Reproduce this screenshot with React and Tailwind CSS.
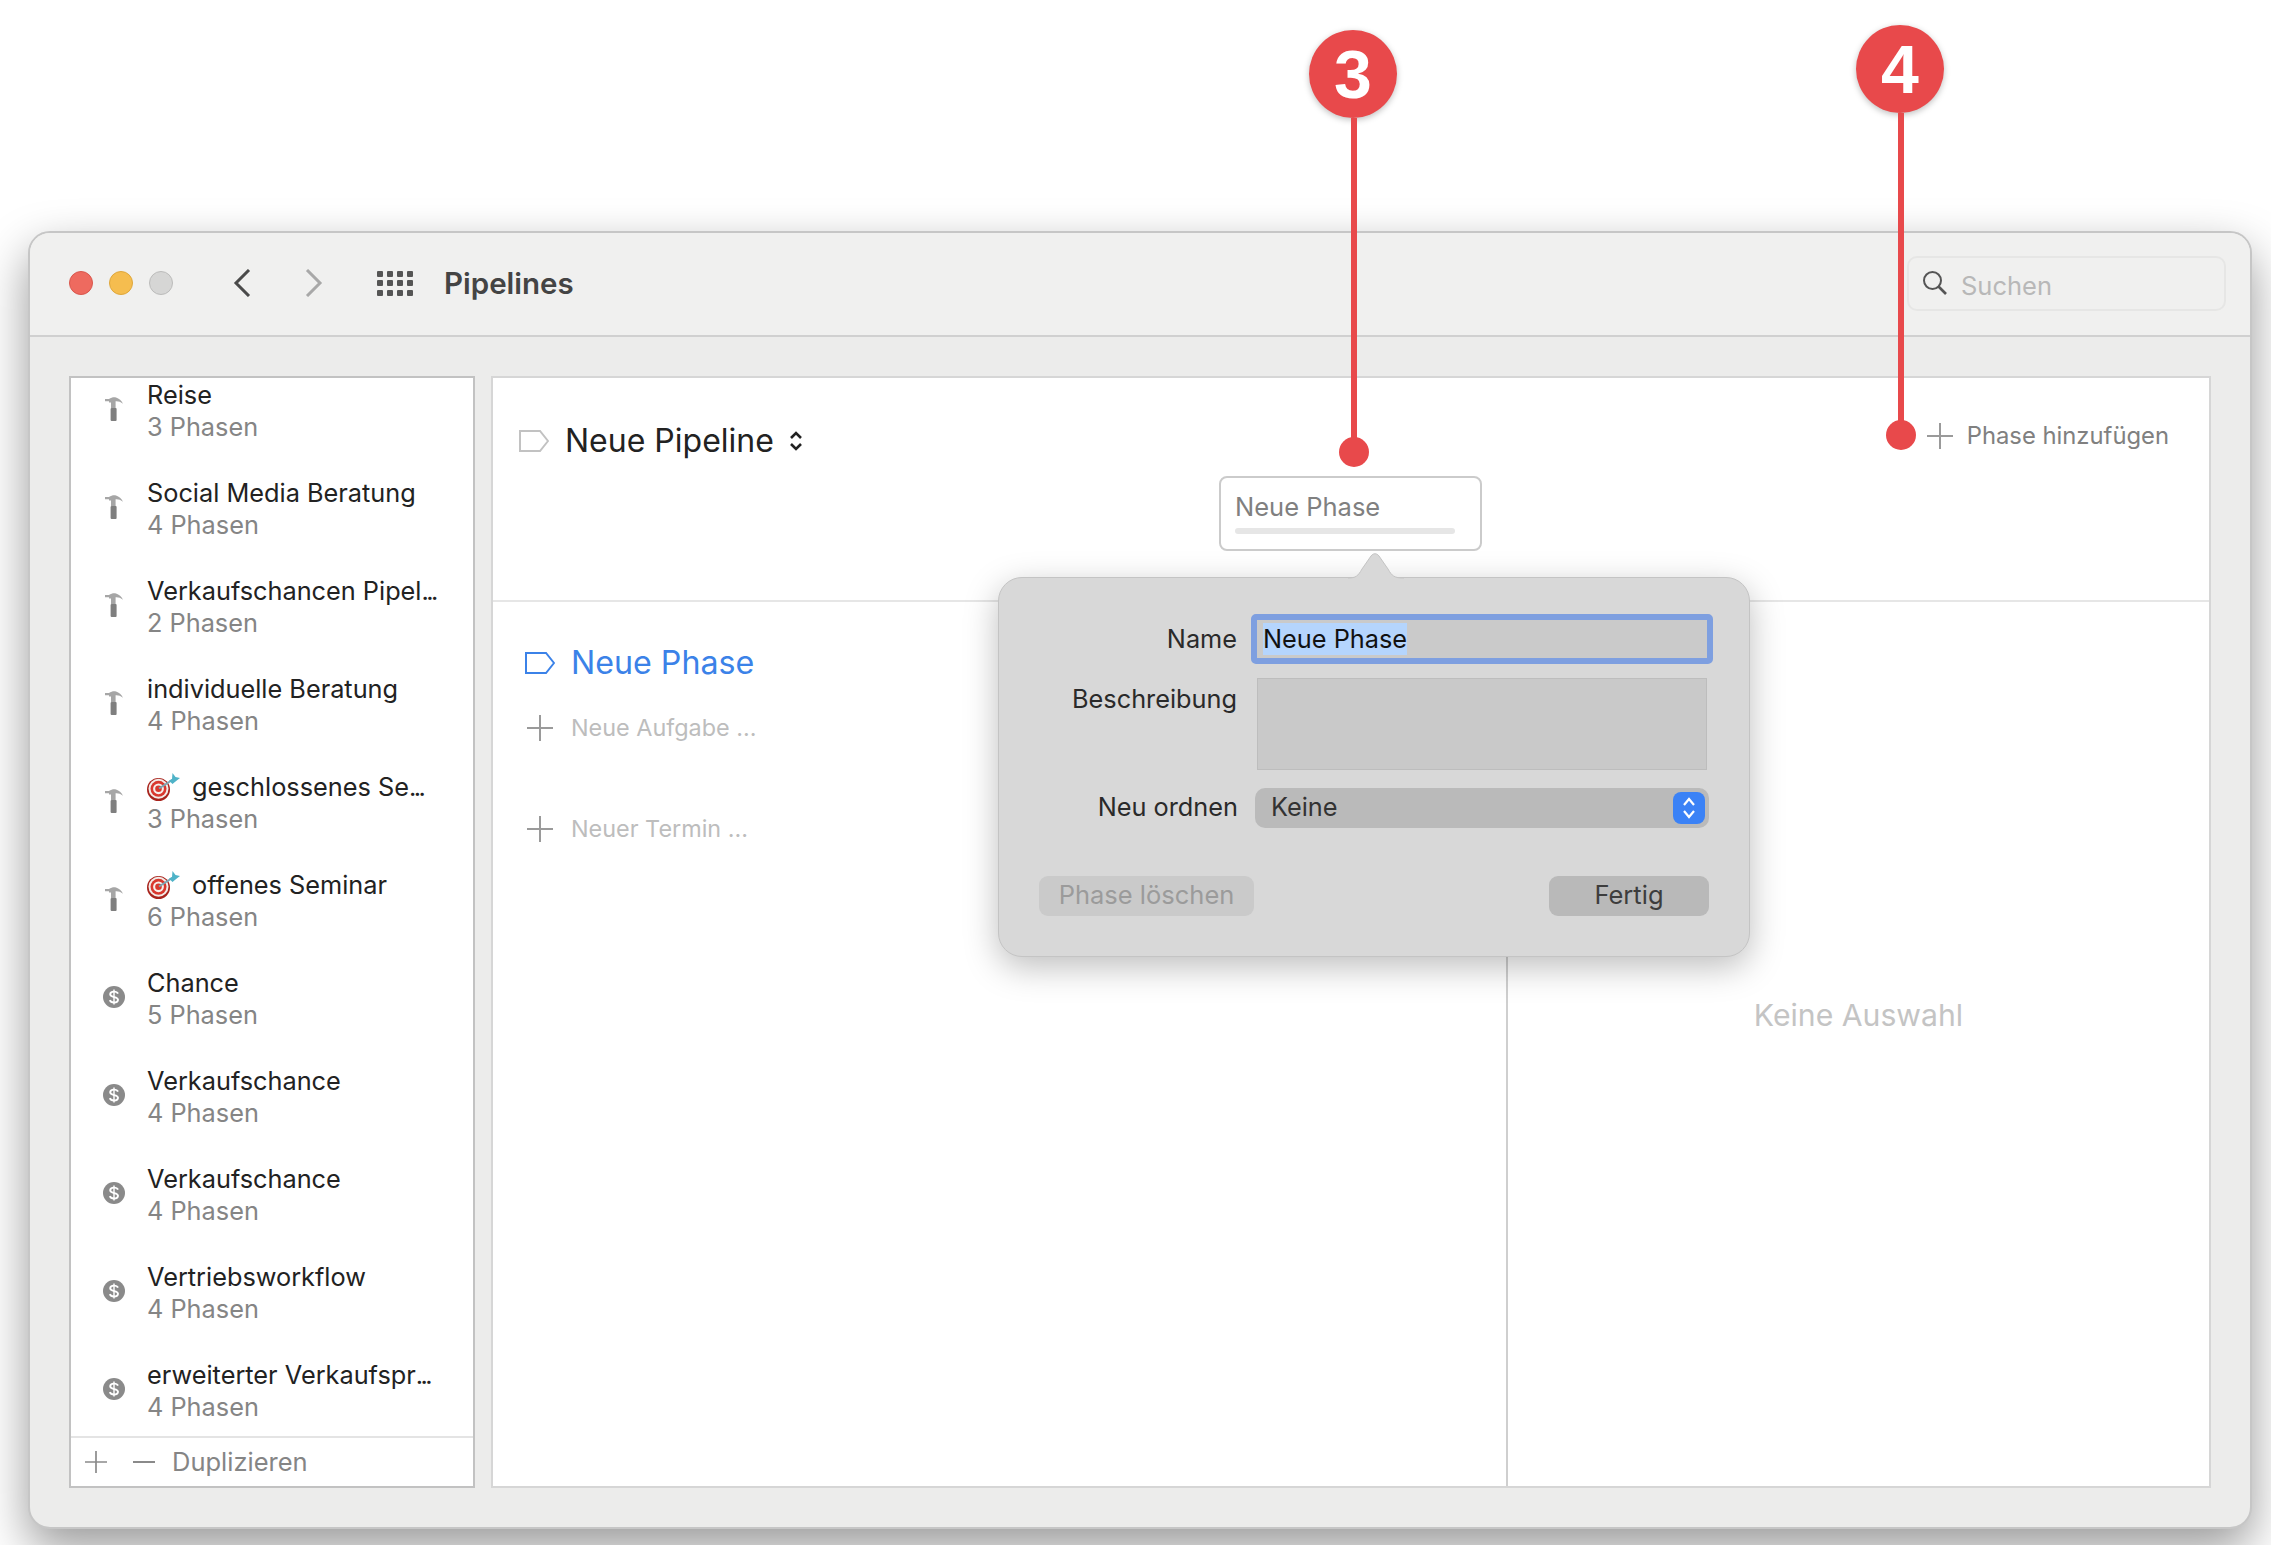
import React from "react";

const rows = [
  { k: "h", t: "Reise", s: "3 Phasen" },
  { k: "h", t: "Social Media Beratung", s: "4 Phasen" },
  { k: "h", t: "Verkaufschancen Pipel", d: true, s: "2 Phasen" },
  { k: "h", t: "individuelle Beratung", s: "4 Phasen" },
  { k: "h", e: true, t: "geschlossenes Se", d: true, s: "3 Phasen" },
  { k: "h", e: true, t: "offenes Seminar", s: "6 Phasen" },
  { k: "d", t: "Chance", s: "5 Phasen" },
  { k: "d", t: "Verkaufschance", s: "4 Phasen" },
  { k: "d", t: "Verkaufschance", s: "4 Phasen" },
  { k: "d", t: "Vertriebsworkflow", s: "4 Phasen" },
  { k: "d", t: "erweiterter Verkaufspr", d: true, s: "4 Phasen" },
];

function Hammer() {
  return (
    <svg width="18" height="24" viewBox="0 0 18 24">
      <path d="M0 2h4C6.500 .4 9 0 11 .6c3 .9 5.600 3.200 7 6.200-2.200-1.900-4.800-2.700-7.400-2.500V11H6V5.400H4V4.200H0z" fill="#a6a6a6" />
      <rect x="5.600" y="11" width="6" height="13" rx="1" fill="#7f7f7f" />
    </svg>
  );
}

function Dollar() {
  return (
    <svg width="22" height="22" viewBox="0 0 22 22" fill="none">
      <circle cx="11" cy="11" r="11" fill="#8a8a8a" />
      <path d="M15 7.600c-.6-1.300-2-2-4-2-2.300 0-3.800 1-3.800 2.700 0 3.900 7.800 1.700 7.800 5.500 0 1.700-1.600 2.700-4 2.700-2.200 0-3.600-.8-4.200-2.300" stroke="white" strokeWidth="1.900" />
      <path d="M11 3.400v15.200" stroke="white" strokeWidth="1.400" />
    </svg>
  );
}

function Dart() {
  return (
    <svg width="33" height="28" viewBox="0 0 33 28" className="mr-[12px] shrink-0">
      <circle cx="11.500" cy="16.500" r="11.500" fill="#a8231c" />
      <circle cx="11.500" cy="15.800" r="10" fill="#f3ece8" />
      <circle cx="11.500" cy="15.800" r="8" fill="#d9382e" />
      <circle cx="11.500" cy="15.800" r="5.400" fill="#f6efeb" />
      <circle cx="11.500" cy="15.800" r="3.300" fill="#d9382e" />
      <path d="M12 15.500L26 6.500" stroke="#7ba6b3" strokeWidth="2" />
      <path d="M22 7.500l3-1.500 .5-6 3 4 4.500 1-4.500 3.500-3 2.500z" fill="#4fb3c8" />
    </svg>
  );
}

function Tag({ color }) {
  return (
    <svg width="30" height="22" viewBox="0 0 30 22" fill="none">
      <path d="M1 1h20l8 10-8 10H1z" stroke={color} strokeWidth="2" />
    </svg>
  );
}

function Plus({ size = 26, color = "#9a9a9a" }) {
  return (
    <svg width={size} height={size} viewBox="0 0 26 26">
      <path d="M13 0v26M0 13h26" stroke={color} strokeWidth="2" />
    </svg>
  );
}

function Row({ r }) {
  return (
    <div className="flex h-[98px] shrink-0 items-center pl-[32px]">
      <div className="-mt-[4px] flex w-[22px] justify-center">{r.k === "h" ? <Hammer /> : <Dollar />}</div>
      <div className="ml-[22px] flex flex-col">
        <div className="flex h-[32px] items-center text-[25.300px] leading-[32px] text-[#222222]">
          {r.e && <Dart />}
          <span className="whitespace-nowrap">{r.t}</span>
          {r.d && <span className="tracking-[-2.500px]">...</span>}
        </div>
        <div className="text-[25.300px] leading-[32px] text-[#858585]">{r.s}</div>
      </div>
    </div>
  );
}

function Annotation({ n, left, top, lineH }) {
  return (
    <div className="absolute flex w-[88px] flex-col items-center" style={{ left, top }}>
      <div className="flex h-[88px] w-[88px] items-center justify-center rounded-full bg-[#e8494b] text-[68px] font-bold leading-none text-white shadow-[0_2px_6px_rgba(0,0,0,0.25)] font-['Liberation_Sans',sans-serif]">
        {n}
      </div>
      <div className="ml-[2px] w-[6px] bg-[#e8494b]" style={{ height: lineH }} />
      <div className="-mt-[4px] ml-[2px] h-[30px] w-[30px] rounded-full bg-[#e8494b]" />
    </div>
  );
}

export default function App() {
  return (
    <div className="relative h-[1545px] w-[2271px] overflow-hidden bg-white pl-[28px] pt-[231px] font-['Inter',sans-serif]">
      <div className="relative flex h-[1298px] w-[2224px] flex-col overflow-hidden rounded-[22px] border-2 border-[#c6c6c6] bg-[#ecECEB] shadow-[0_20px_48px_rgba(0,0,0,0.4)]">
        {/* Title bar */}
        <div className="flex h-[104px] shrink-0 items-center border-b-2 border-[#d0d0d0] bg-[#f0f0ef] pb-[2px] pl-[39px] pr-[24px]">
          <div className="h-[24px] w-[24px] rounded-full bg-[#ee6a5f] border border-[#d9574d]" />
          <div className="ml-[16px] h-[24px] w-[24px] rounded-full bg-[#f5bd4f] border border-[#dfa73b]" />
          <div className="ml-[16px] h-[24px] w-[24px] rounded-full bg-[#d6d6d5] border border-[#bcbcbb]" />
          <svg width="18" height="28" viewBox="0 0 18 28" fill="none" className="ml-[60px]">
            <path d="M16 1L3 14l13 13" stroke="#4a4a4a" strokeWidth="3" />
          </svg>
          <svg width="18" height="28" viewBox="0 0 18 28" fill="none" className="ml-[54px]">
            <path d="M2 1l13 13L2 27" stroke="#a8a8a8" strokeWidth="3" />
          </svg>
          <div className="ml-[54px] grid grid-cols-4 gap-x-[4px] gap-y-[3.500px]">
            {Array.from({ length: 12 }).map((_, i) => (
              <div key={i} className="h-[6px] w-[6px] rounded-[1px] bg-[#555555]" />
            ))}
          </div>
          <div className="ml-[31px] text-[29.500px] font-semibold text-[#444444]">Pipelines</div>
          <div className="ml-auto flex h-[55px] w-[319px] items-center rounded-[10px] border-2 border-[#e6e6e5] pl-[13px]">
            <svg width="26" height="26" viewBox="0 0 26 26" fill="none">
              <circle cx="10.500" cy="10.500" r="8.500" stroke="#555555" strokeWidth="2" />
              <path d="M16.500 16.500L24 24" stroke="#555555" strokeWidth="2.600" />
            </svg>
            <span className="ml-[13px] pt-[7px] text-[25.500px] text-[#b8b8b8]">Suchen</span>
          </div>
        </div>

        {/* Content */}
        <div className="flex min-h-0 flex-1 gap-[16px] pb-[39px] pl-[39px] pr-[39px] pt-[39px]">
          <div className="flex w-[406px] shrink-0 flex-col border-2 border-[#c2c2c2] bg-white">
            <div className="min-h-0 flex-1 overflow-hidden">
              <div className="-mt-[16px] flex flex-col">
                {rows.map((r, i) => (
                  <Row key={i} r={r} />
                ))}
              </div>
            </div>
            <div className="flex h-[50px] shrink-0 items-center border-t-2 border-[#e4e4e4] pl-[14px]">
              <Plus size={22} color="#8a8a8a" />
              <div className="ml-[26px] h-[2px] w-[22px] bg-[#8a8a8a]" />
              <span className="ml-[17px] text-[25.500px] text-[#858585]">Duplizieren</span>
            </div>
          </div>

          <div className="flex min-w-0 flex-1 flex-col border-2 border-[#d6d6d6] bg-white">
            <div className="flex h-[224px] shrink-0 flex-col border-b-2 border-[#e6e6e6]">
              <div className="flex items-center justify-between pl-[26px] pr-[40px] pt-[43px]">
                <div className="flex items-center">
                  <Tag color="#c2c2c2" />
                  <span className="ml-[16px] text-[32px] leading-[40px] text-[#222222]">Neue Pipeline</span>
                  <svg width="14" height="20" viewBox="0 0 14 20" fill="none" className="ml-[15px]">
                    <path d="M2 7l5-5 5 5M2 13l5 5 5-5" stroke="#222222" strokeWidth="2.600" />
                  </svg>
                </div>
                <div className="-mt-[10px] flex items-center">
                  <Plus />
                  <span className="ml-[14px] text-[23.800px] text-[#808080]">Phase hinzufügen</span>
                </div>
              </div>
              <div className="ml-[726px] mt-[15px] flex h-[75px] w-[263px] flex-col rounded-[8px] border-2 border-[#cbcbcb] bg-white pl-[14px] pr-[25px] pt-[13px]">
                <div className="text-[25.500px] leading-[32px] text-[#808080]">Neue Phase</div>
                <div className="mt-[5px] h-[6px] rounded-full bg-[#e6e6e6]" />
              </div>
            </div>
            <div className="flex min-h-0 flex-1">
              <div className="w-[1015px] shrink-0 border-r-2 border-[#cfcfcf] pl-[32px] pt-[41px]">
                <div className="flex items-center">
                  <Tag color="#3b82e8" />
                  <span className="ml-[16px] text-[32.200px] leading-[40px] text-[#3b82e8]">Neue Phase</span>
                </div>
                <div className="ml-[2px] mt-[27px] flex items-center">
                  <Plus />
                  <span className="ml-[18px] text-[23.400px] text-[#bdbdbd]">Neue Aufgabe ...</span>
                </div>
                <div className="ml-[2px] mt-[66px] flex items-center">
                  <Plus />
                  <span className="ml-[18px] text-[23.400px] text-[#bdbdbd]">Neuer Termin ...</span>
                </div>
              </div>
              <div className="flex flex-1 justify-center pt-[393px] text-[30.200px] leading-[40px] text-[#c4c4c4]">
                Keine Auswahl
              </div>
            </div>
          </div>
        </div>
      </div>

      {/* Popover */}
      <div className="absolute left-[998px] top-[577px] w-[752px] rounded-[24px] border border-[#c4c4c4] bg-[#d8d8d8] pb-[40px] pt-[36px] shadow-[0_10px_34px_rgba(0,0,0,0.26)]">
        <svg width="60" height="26" viewBox="0 0 60 26" className="absolute left-[347px] -top-[25px]">
          <path d="M2 25c8 0 10-2 14-9L25 3c2.200-3 5.800-3 8 0l9 13c4 7 6 9 16 9z" fill="#d8d8d8" />
          <path d="M2 25c8 0 10-2 14-9L25 3c2.200-3 5.800-3 8 0l9 13c4 7 6 9 16 9" fill="none" stroke="#c4c4c4" strokeWidth="1" />
        </svg>
        <div className="flex items-center">
          <div className="w-[238px] text-right text-[25.300px] leading-[32px] text-[#2a2a2a]">Name</div>
          <div className="ml-[14px] flex h-[50px] w-[462px] items-center rounded-[5px] border-[6px] border-[#7e9fe0] bg-[#cacaca] pl-[6px]">
            <span className="bg-[#b5d5fd] text-[25.300px] leading-[32px] text-[#111111]">Neue Phase</span>
          </div>
        </div>
        <div className="mt-[14px] flex">
          <div className="w-[238px] pt-[5px] text-right text-[25.300px] leading-[32px] text-[#2a2a2a]">Beschreibung</div>
          <div className="ml-[20px] h-[92px] w-[450px] border border-[#bdbdbd] bg-[#c9c9c9]" />
        </div>
        <div className="mt-[18px] flex items-center">
          <div className="w-[239px] pb-[3px] text-right text-[25.300px] leading-[32px] text-[#2a2a2a]">Neu ordnen</div>
          <div className="ml-[17px] flex h-[40px] w-[454px] items-center rounded-[10px] bg-[#bababa] pl-[16px] pr-[4px]">
            <span className="pb-[2px] text-[25.300px] text-[#333333]">Keine</span>
            <div className="ml-auto flex h-[32px] w-[32px] items-center justify-center rounded-[8px] bg-[#3b82f6]">
              <svg width="14" height="24" viewBox="0 0 14 24" fill="none">
                <path d="M2 9l5-6 5 6M2 15l5 6 5-6" stroke="white" strokeWidth="2.200" />
              </svg>
            </div>
          </div>
        </div>
        <div className="mt-[48px] flex justify-between pl-[40px] pr-[40px]">
          <div className="flex h-[40px] w-[215px] items-center justify-center rounded-[9px] bg-[#cacaca] pb-[2px] text-[25.500px] text-[#9b9b9b]">Phase löschen</div>
          <div className="flex h-[40px] w-[160px] items-center justify-center rounded-[9px] bg-[#b9b9b9] pb-[2px] text-[25.500px] text-[#3d3d3d]">Fertig</div>
        </div>
      </div>

      <Annotation n="3" left="1309px" top="30px" lineH="323px" />
      <Annotation n="4" left="1856px" top="25px" lineH="311px" />
    </div>
  );
}
